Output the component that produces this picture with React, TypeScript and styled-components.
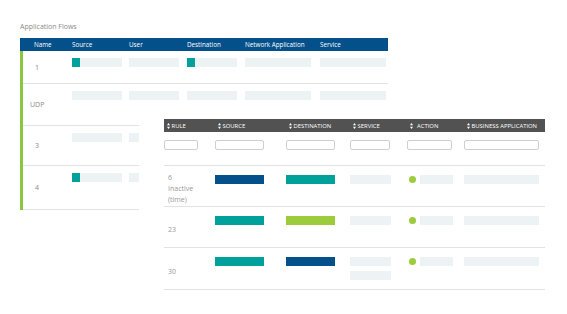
import React from "react";
import styled, { createGlobalStyle } from "styled-components";

const GlobalStyle = createGlobalStyle`
  html, body {
    margin: 0;
    padding: 0;
    background: #ffffff;
    font-family: "Open Sans", "Noto Sans", sans-serif;
  }
`;

const Page = styled.div`
  position: relative;
  width: 567px;
  height: 314px;
  overflow: hidden;
  background: #ffffff;
`;

const BackPanel = styled.div`
  display: flex;
  flex-direction: column;
  width: 368px;
  padding: 22px 0 0 20px;
`;

const PanelTitle = styled.div`
  font-size: 7px;
  line-height: 10px;
  color: #8a8a8a;
  margin-bottom: 6px;
`;

const BackHeader = styled.div`
  display: grid;
  grid-template-columns: 52px 57px 58px 58px 75px 68px;
  height: 13px;
  align-items: center;
  background: #03508a;
  color: #ffffff;
  font-size: 6.3px;
`;

const HeadCell = styled.div<{ $indent?: number }>`
  padding-left: ${(p) => p.$indent ?? 0}px;
  white-space: nowrap;
`;

const BackBody = styled.div`
  display: flex;
  flex-direction: column;
  border-left: 3px solid #8cc63f;
`;

const BackRow = styled.div<{ $h: number }>`
  display: grid;
  grid-template-columns: 49px 57px 58px 58px 75px 68px;
  height: ${(p) => p.$h}px;
  padding-top: 7px;
  box-sizing: border-box;
  border-bottom: 1.5px solid #e3e3e3;
`;

const NameCell = styled.div<{ $indent: number }>`
  align-self: center;
  margin-top: -7px;
  padding-left: ${(p) => p.$indent}px;
  font-size: 7px;
  color: #8a8a8a;
`;

const Bar = styled.div<{ $w: number; $color?: string }>`
  display: flex;
  width: ${(p) => p.$w}px;
  height: 9px;
  background: ${(p) => p.$color ?? "#edf2f5"};
`;

const Marker = styled.div`
  width: 8px;
  height: 9px;
  background: #00a19a;
`;

const FrontCard = styled.div`
  position: absolute;
  left: 139px;
  top: 100px;
  right: 0;
  bottom: 0;
  background: #ffffff;
  padding: 19px 0 0 25px;
`;

const FrontTable = styled.div`
  width: 381px;
  display: flex;
  flex-direction: column;
`;

const cols = "51px 71px 64px 57px 57px 81px";

const FrontHeader = styled.div`
  display: grid;
  grid-template-columns: ${cols};
  height: 13px;
  align-items: center;
  background: #525252;
  color: #ffffff;
  font-size: 5.9px;
`;

const SortHead = styled.div<{ $gap?: number }>`
  display: flex;
  align-items: center;
  gap: ${(p) => p.$gap ?? 1.5}px;
  padding-left: 3px;
  white-space: nowrap;
`;

const FilterRow = styled.div`
  display: grid;
  grid-template-columns: ${cols};
  height: 34px;
  padding-top: 8px;
  box-sizing: border-box;
  border-bottom: 1.5px solid #e3e3e3;
`;

const FilterInput = styled.div<{ $w: number }>`
  width: ${(p) => p.$w}px;
  height: 10px;
  box-sizing: border-box;
  border: 1px solid #cfcfcf;
  border-radius: 2px;
`;

const FrontRow = styled.div<{ $h: number }>`
  display: grid;
  grid-template-columns: ${cols};
  align-items: start;
  height: ${(p) => p.$h}px;
  padding-top: 9px;
  box-sizing: border-box;
  border-bottom: 1.5px solid #e3e3e3;
`;

const RuleCell = styled.div`
  align-self: center;
  margin-top: -4px;
  padding-left: 4px;
  font-size: 7px;
  line-height: 11px;
  color: #999999;
`;

const Stack = styled.div`
  display: flex;
  flex-direction: column;
  gap: 5px;
`;

const ActionCell = styled.div`
  display: flex;
  align-items: center;
  gap: 4px;
  padding-left: 2px;
`;

const Dot = styled.div`
  width: 7px;
  height: 7px;
  border-radius: 50%;
  background: #9ccc3c;
`;

function SortIcon() {
  return (
    <svg width="3" height="6" viewBox="0 0 3 6">
      <path d="M1.5 0 L3 2.3 L0 2.3 Z M1.5 6 L3 3.7 L0 3.7 Z" fill="#ffffff" />
    </svg>
  );
}

const BLUE = "#03508a";
const TEAL = "#00a19a";
const GREEN = "#9ccc3c";

const backRows = [
  { name: "1", indent: 12, h: 33, src: true, dst: true },
  { name: "UDP", indent: 7, h: 42, src: false, dst: false },
  { name: "3", indent: 12, h: 40, src: false, dst: false },
  { name: "4", indent: 12, h: 44, src: true, dst: false },
];

const frontRows = [
  { rule: ["6", "Inactive", "(time)"], src: BLUE, dst: TEAL, services: 1, h: 41 },
  { rule: ["23"], src: TEAL, dst: GREEN, services: 1, h: 41 },
  { rule: ["30"], src: TEAL, dst: BLUE, services: 2, h: 42 },
];

export default function App() {
  return (
    <Page>
      <GlobalStyle />
      <BackPanel>
        <PanelTitle>Application Flows</PanelTitle>
        <BackHeader>
          <HeadCell $indent={14}>Name</HeadCell>
          <HeadCell>Source</HeadCell>
          <HeadCell>User</HeadCell>
          <HeadCell>Destination</HeadCell>
          <HeadCell>Network Application</HeadCell>
          <HeadCell>Service</HeadCell>
        </BackHeader>
        <BackBody>
          {backRows.map((r) => (
            <BackRow key={r.name} $h={r.h}>
              <NameCell $indent={r.indent}>{r.name}</NameCell>
              <Bar $w={50}>{r.src && <Marker />}</Bar>
              <Bar $w={50} />
              <Bar $w={50}>{r.dst && <Marker />}</Bar>
              <Bar $w={66} />
              <Bar $w={66} />
            </BackRow>
          ))}
        </BackBody>
      </BackPanel>

      <FrontCard>
        <FrontTable>
          <FrontHeader>
            <SortHead><SortIcon />RULE</SortHead>
            <SortHead><SortIcon />SOURCE</SortHead>
            <SortHead><SortIcon />DESTINATION</SortHead>
            <SortHead><SortIcon />SERVICE</SortHead>
            <SortHead $gap={4}><SortIcon />ACTION</SortHead>
            <SortHead><SortIcon />BUSINESS APPLICATION</SortHead>
          </FrontHeader>
          <FilterRow>
            <FilterInput $w={34} />
            <FilterInput $w={49} />
            <FilterInput $w={49} />
            <FilterInput $w={40} />
            <FilterInput $w={45} />
            <FilterInput $w={75} />
          </FilterRow>
          {frontRows.map((r) => (
            <FrontRow key={r.rule[0]} $h={r.h}>
              <RuleCell>
                {r.rule.map((line) => (
                  <div key={line}>{line}</div>
                ))}
              </RuleCell>
              <Bar $w={49} $color={r.src} />
              <Bar $w={49} $color={r.dst} />
              <Stack>
                {Array.from({ length: r.services }).map((_, i) => (
                  <Bar key={i} $w={41} />
                ))}
              </Stack>
              <ActionCell>
                <Dot />
                <Bar $w={33} />
              </ActionCell>
              <Bar $w={75} />
            </FrontRow>
          ))}
        </FrontTable>
      </FrontCard>
    </Page>
  );
}
